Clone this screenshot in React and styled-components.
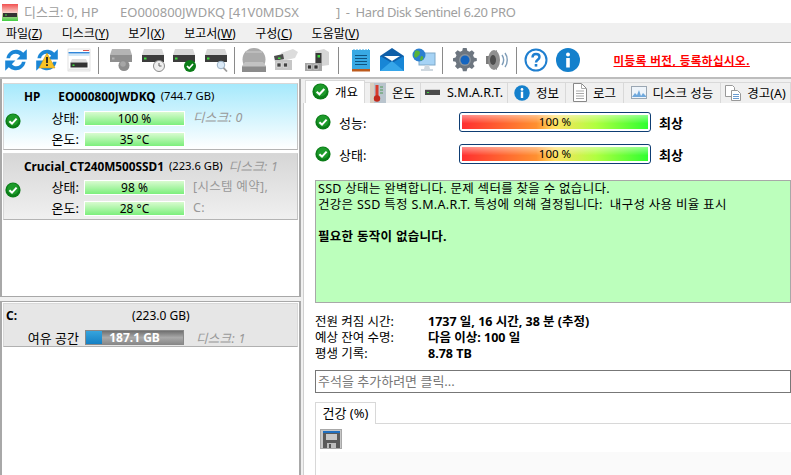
import React from 'react';
import styled, { createGlobalStyle } from 'styled-components';

const FONT = `"Noto Sans", "Noto Sans CJK KR", sans-serif`;

const GlobalStyle = createGlobalStyle`
  html, body {
    margin: 0;
    padding: 0;
    width: 791px;
    height: 475px;
    overflow: hidden;
    background: #f0f0f0;
    font-family: ${FONT};
    font-size: 12px;
    color: #000;
  }
  * { box-sizing: border-box; }
  svg { flex: none; }
`;

// --- icons ---
const Check = ({ size = 16 }) => (
  <svg width={size} height={size} viewBox="0 0 16 16">
    <circle cx="8" cy="8" r="7.6" fill="#0b7d18" />
    <circle cx="8" cy="7" r="5.8" fill="#1d9a2a" />
    <path d="M4.4 8.2 7 10.6 11.6 5.6" fill="none" stroke="#fff" strokeWidth="2" />
  </svg>
);

const Info = ({ size = 16 }) => (
  <svg width={size} height={size} viewBox="0 0 24 24">
    <circle cx="12" cy="12" r="11.6" fill="#1480cc" />
    <circle cx="12" cy="6.6" r="2" fill="#fff" />
    <rect x="10.2" y="10" width="3.6" height="9.5" fill="#fff" />
  </svg>
);

const Drive = ({ muted }) => (
  <>
    <path d="M3 1h18l2 6H1z" fill={muted ? '#b4b4b4' : '#d8d8d8'} />
    <rect x="1" y="7" width="22" height="7" fill={muted ? '#8f8f8f' : '#3c3c3c'} />
    <rect x="3" y="9.5" width="2.5" height="2" fill={muted ? '#b4b4b4' : '#3fdc3f'} />
  </>
);

const Refresh = () => (
  <g transform="translate(-2.4 -2.4) scale(1.2)">
    <path d="M4 10.5C5 5.5 9 3 13 3.5c2.200.3 3.800 1.200 5 2.500L21 3v8.500h-8.500l3-3c-1-1-2.200-1.700-3.700-1.700-2.500 0-4.300 1.300-4.800 3.700z" fill="#1b86d6" />
    <path d="M20 13.500C19 18.500 15 21 11 20.500c-2.200-.3-3.800-1.200-5-2.500L3 21v-8.500h8.500l-3 3c1 1 2.200 1.700 3.700 1.700 2.500 0 4.300-1.300 4.800-3.700z" fill="#1b86d6" />
  </g>
);

const toolIcons = {
  refresh: <Refresh />,
  refreshWarn: (
    <>
      <Refresh />
      <path d="M12 5 20 20H4z" fill="#f7c325" stroke="#c98f10" strokeWidth=".5" />
      <rect x="11.100" y="9" width="1.800" height="6" fill="#222" />
      <rect x="11.100" y="16.200" width="1.800" height="1.800" fill="#222" />
    </>
  ),
  window: (
    <>
      <rect x="1" y="1" width="22" height="22" fill="#fff" stroke="#ccc" strokeWidth=".6" />
      <rect x="1.500" y="4" width="21" height="1.500" fill="#2f86d9" />
      <rect x="1.500" y="6.500" width="21" height="1" fill="#9fd0f2" />
      <rect x="16" y="2" width="6" height="1" fill="#d9534f" />
      <path d="M5 11h14l1.500 3.500h-17z" fill="#ddd" />
      <rect x="3.500" y="14.500" width="17" height="5" fill="#333" />
      <rect x="5.500" y="16.500" width="2" height="1.500" fill="#3fdc3f" />
      <rect x="1.500" y="20.500" width="21" height="2" fill="#e6e6e6" />
    </>
  ),
  driveRound: (
    <>
      <Drive muted />
      <circle cx="15" cy="17.500" r="5.500" fill="#8d8d8d" />
      <circle cx="14" cy="16" r="2.800" fill="#a6a6a6" />
    </>
  ),
  driveClock: (
    <>
      <Drive />
      <circle cx="18" cy="18" r="5.500" fill="#eee" stroke="#8a8a8a" />
      <path d="M18 15v3h2.500" fill="none" stroke="#666" />
    </>
  ),
  driveCheck: (
    <>
      <Drive />
      <circle cx="18" cy="18" r="6" fill="#0b7d18" />
      <path d="M15 18 17.200 20.200 21 16" fill="none" stroke="#fff" strokeWidth="1.700" />
    </>
  ),
  driveSearch: (
    <>
      <Drive />
      <circle cx="17" cy="17" r="3.800" fill="#dbeaf7" stroke="#9bb2c6" />
      <path d="M19.500 19.800 23 23.500" stroke="#9a9a9a" strokeWidth="1.700" />
    </>
  ),
  dome: (
    <>
      <circle cx="12" cy="11.500" r="11.500" fill="#ababab" />
      <path d="M4 4h16" stroke="#c2c2c2" strokeWidth="1.500" />
      <path d="M3 14h18l3 4v6H0v-6z" fill="#c2c2c2" />
      <rect x="0" y="18.500" width="24" height="5.500" fill="#8b8b8b" />
    </>
  ),
  dock: (
    <>
      <path d="M7 5 19 1l5 3-3 6-13 3z" fill="#dcdcdc" />
      <path d="M0 8l9-2 1 5-9 2z" fill="#4d4d4d" />
      <rect x="1" y="12" width="17" height="10" fill="#c6c6c6" />
      <rect x="3" y="15" width="4" height="4" fill="#444" stroke="#eee" strokeWidth=".6" />
      <rect x="9.500" y="15" width="4" height="4" fill="#444" stroke="#eee" strokeWidth=".6" />
      <rect x="4" y="9.500" width="2.500" height="1.500" fill="#3fdc3f" />
    </>
  ),
  tower: (
    <>
      <path d="M10 3 19 1l5 3v13l-14 2z" fill="#d6d6d6" />
      <rect x="10.500" y="5" width="6" height="10" fill="#3a3a3a" />
      <rect x="12.500" y="7" width="2.500" height="2.500" fill="#3fdc3f" />
      <rect x="0" y="15" width="17" height="8" fill="#a6a6a6" />
      <rect x="2.500" y="17" width="4" height="4" fill="#333" stroke="#eee" strokeWidth=".6" />
      <rect x="9" y="17" width="4" height="4" fill="#333" stroke="#eee" strokeWidth=".6" />
    </>
  ),
  notes: (
    <>
      <rect x="3" y="2" width="18" height="20" fill="#38a9e4" />
      <rect x="3" y="21" width="18" height="2.500" fill="#bd5b1d" />
      <path d="M5 1v3M8 1v3M11 1v3M14 1v3M17 1v3M19.500 1v3" stroke="#38a9e4" strokeWidth="1" />
      <path d="M6 7.500h12M6 10.500h12M6 13.500h12M6 16.500h12" stroke="#10537f" strokeWidth="1" />
    </>
  ),
  mail: (
    <>
      <rect x="0" y="8" width="24" height="15" fill="#1786d6" />
      <path d="M0 8 12 0l12 8-12 7z" fill="#0f5fa8" />
      <path d="M4 8h16l-8 5z" fill="#fff" />
      <path d="M0 23 12 13l12 10z" fill="#36a6ea" />
    </>
  ),
  globe: (
    <>
      <rect x="7" y="5" width="16" height="12" fill="#a6d3f5" stroke="#7fa9c9" />
      <path d="M13 17h4l1 4h3v2H9v-2h3z" fill="#cfd8df" />
      <circle cx="7" cy="7" r="6.500" fill="#2a7fd0" />
      <path d="M3 3c3-1 5 0 5 2S6 8 5 9 3 10 2 8zM9 8c2 0 3 1 2 3s-3 2-3 0z" fill="#58b33a" />
    </>
  ),
  gear: (
    <>
      <path d="M10 1h4l.7 3 2.300 1 2.600-1.600 2.800 2.800L20.800 8.800l1 2.300 3 .9v3l-3 .7-1 2.300 1.600 2.600-2.800 2.800-2.600-1.600-2.300 1-.7 3h-4l-.7-3-2.300-1-2.600 1.600-2.800-2.800 1.600-2.600-1-2.300-3-.7v-3l3-.9 1-2.300L1.600 6.200l2.800-2.800L7 5l2.300-1z" fill="#6d7680" transform="translate(0.500 -1) scale(.94)" />
      <circle cx="12" cy="12" r="6" fill="#8c949c" />
      <circle cx="12" cy="12" r="4.500" fill="#1565c0" />
    </>
  ),
  speaker: (
    <>
      <path d="M1 8h4l7-6v20l-7-6H1z" fill="#7b7b7b" />
      <ellipse cx="9" cy="12" rx="6" ry="10" fill="#8f8f8f" />
      <ellipse cx="8" cy="12" rx="3" ry="5" fill="#4d4d4d" />
      <path d="M17 7c2 3 2 7 0 10M20 5c3 4 3 10 0 14" fill="none" stroke="#7f9db8" strokeWidth="1.400" />
    </>
  ),
  help: (
    <>
      <circle cx="12" cy="12" r="10.500" fill="#fff" stroke="#1f7fd0" strokeWidth="2" />
      <path d="M8.500 9.500C8.500 7 10 6 12 6s3.500 1.200 3.500 3c0 2.800-3.500 2.700-3.500 5.500" fill="none" stroke="#1f7fd0" strokeWidth="2.400" />
      <rect x="10.700" y="16" width="2.600" height="2.600" fill="#1f7fd0" />
    </>
  ),
  info: (
    <>
      <circle cx="12" cy="12" r="12" fill="#1480cc" />
      <circle cx="12" cy="6.500" r="2" fill="#fff" />
      <rect x="10.200" y="10" width="3.600" height="9.500" fill="#fff" />
    </>
  ),
};

const Thermo = () => (
  <svg width="16" height="20" viewBox="0 0 16 20">
    <rect width="16" height="20" fill="#b9c4cd" />
    <rect width="4" height="20" fill="#d9cfc0" />
    <rect x="5.500" y="2" width="3" height="13" fill="#d83a2a" />
    <circle cx="7" cy="15.500" r="3.200" fill="#c22a1c" />
    <path d="M10 4h3M10 7h3M10 10h3" stroke="#4f9a55" />
  </svg>
);

const SmallDrive = () => (
  <svg width="16" height="10" viewBox="0 0 16 10">
    <rect y="2" width="15" height="5" fill="#4a4a4a" />
    <rect y="1" width="15" height="1" fill="#cfcfcf" />
    <rect x="2" y="4" width="2" height="1" fill="#3fdc3f" />
  </svg>
);

const DocIcon = () => (
  <svg width="14" height="19" viewBox="0 0 14 19">
    <path d="M.5.500h8l5 5v13H.500z" fill="#fff" stroke="#888" />
    <path d="M8.500.500v5h5M3 8h8M3 10.500h8M3 13h8M3 15.500h8" fill="none" stroke="#aaa" />
  </svg>
);

const ChartIcon = () => (
  <svg width="16" height="13" viewBox="0 0 16 13">
    <rect x=".5" y=".5" width="15" height="12" fill="#eef4fa" stroke="#9aa6b2" />
    <path d="M1 11 4 7l2 2 2-5 2 6 2-3 3 3v1H1z" fill="#6fa8dc" />
  </svg>
);

const CopyIcon = () => (
  <svg width="16" height="16" viewBox="0 0 16 16">
    <path d="M.5.500h7l2 2v9h-9z" fill="#fff" stroke="#999" />
    <path d="M6.500 5.500h6l3 3v7h-9z" fill="#fff" stroke="#999" />
    <path d="M8 9.500h6M8 11.500h6M8 13.500h6" stroke="#6a9bd0" />
  </svg>
);

const AppIcon = () => (
  <svg width="16" height="18" viewBox="0 0 16 18">
    <defs>
      <linearGradient id="appg" x1="0" y1="0" x2="0" y2="1">
        <stop offset="0" stopColor="#f25050" />
        <stop offset=".5" stopColor="#f6d0c8" />
        <stop offset="1" stopColor="#40d040" />
      </linearGradient>
    </defs>
    <rect y="1" width="16" height="17" fill="url(#appg)" />
    <rect x="1" y="10" width="14" height="4" fill="#333" />
    <rect x="3" y="11.500" width="2" height="1" fill="#3fdc3f" />
  </svg>
);

const SaveIcon = () => (
  <svg width="17" height="17" viewBox="0 0 17 17">
    <rect width="17" height="17" fill="#5a5a5a" />
    <rect x="0" y="0" width="17" height="2" fill="#1f6fc0" />
    <rect x="3" y="3" width="11" height="6" fill="#c8c8c8" />
    <rect x="4" y="12" width="9" height="5" fill="#bdbdbd" />
    <rect x="6" y="13" width="2" height="4" fill="#555" />
  </svg>
);

// --- page ---
const Page = styled.div`
  width: 791px;
  height: 475px;
  display: flex;
  flex-direction: column;
  overflow: hidden;
  background: #f0f0f0;
`;

const TitleBar = styled.div`
  height: 23px;
  flex: none;
  background: #fff;
  display: flex;
  align-items: center;
  padding-left: 2px;
  gap: 6px;
  font-size: 13px;
  color: #a0a0a0;
  white-space: pre;
`;

const TitleText = styled.span`
  width: ${(p) => p.$w}px;
  flex: none;
  letter-spacing: ${(p) => p.$spacing || 0}px;
`;

const MenuBar = styled.div`
  height: 20px;
  flex: none;
  background: #f0f0f0;
  display: flex;
  align-items: center;
  padding-left: 6px;
  gap: 19.5px;
  border-bottom: 1px solid #a8a8a8;
`;

const MenuItem = styled.span`
  font-size: 12px;
  u { text-decoration: underline; }
`;

const ToolBar = styled.div`
  height: 36px;
  flex: none;
  background: #fff;
  display: flex;
  align-items: center;
  border-bottom: 2px solid #bdbdbd;
`;

const Tool = styled.div`
  width: 31.5px;
  height: 26px;
  flex: none;
  display: flex;
  align-items: center;
  justify-content: center;
`;

const Sep = styled.div`
  width: 1px;
  height: 27px;
  flex: none;
  background: #8a8a8a;
  margin: 0 ${(p) => p.$r}px 0 ${(p) => p.$l}px;
`;

const Register = styled.span`
  margin-left: 30px;
  color: #f00;
  font-size: 11.5px;
  font-weight: 700;
  letter-spacing: .5px;
  text-decoration: underline;
`;

const Main = styled.div`
  flex: 1;
  min-height: 0;
  display: flex;
`;

const LeftColumn = styled.div`
  width: 301px;
  flex: none;
  display: flex;
  flex-direction: column;
  gap: 4px;
`;

const DiskList = styled.div`
  height: 218px;
  flex: none;
  background: #fff;
  border: 1px solid #a8a8a8;
  border-width: 0 2px 1px 2px;
  padding: 4px 1px 0;
  display: flex;
  flex-direction: column;
  gap: 3px;
`;

const VolumeList = styled.div`
  flex: 1;
  background: #fff;
  border: 1px solid #a8a8a8;
  border-width: 1px 2px 0 2px;
  padding: 1px 1px 0;
`;

const DiskCard = styled.div`
  height: 67px;
  border: 1px solid #d8d8d8;
  border-right-color: #c4c4c4;
  border-bottom-color: #b4b4b4;
  background: ${(p) =>
    p.$active
      ? 'linear-gradient(#a6e9fc, #fff)'
      : 'linear-gradient(#d6d6d6, #f0f0f0)'};
  padding: 1px 0 0 20px;
`;

const NameRow = styled.div`
  height: 21px;
  display: flex;
  align-items: center;
  white-space: pre;
  font-size: 11.8px;
`;

const DiskSize = styled.span`
  font-size: 11.2px;
`;

const Bold = styled.b`
  font-weight: 700;
  margin-right: ${(p) => p.$mr || 0}px;
`;

const Faded = styled.span`
  color: #999;
  font-size: 12.5px;
  font-style: ${(p) => (p.$italic ? 'italic' : 'normal')};
  letter-spacing: .3px;
  margin-left: ${(p) => p.$ml || 0}px;
  white-space: pre;
`;

const CardBody = styled.div`
  position: relative;
  margin-top: ${(p) => p.$top}px;
  display: grid;
  grid-template-columns: 55px 99px auto;
  column-gap: 6px;
  row-gap: 7px;
  align-items: center;
`;

const CardCheck = styled.div`
  position: absolute;
  left: -19px;
  top: 2px;
  height: 16px;
  line-height: 0;
`;

const RowLabel = styled.div`
  text-align: right;
  font-size: 13px;
  line-height: 14px;
`;

const Meter = styled.div`
  height: 13px;
  line-height: 13px;
  text-align: center;
  font-size: 12px;
  background: linear-gradient(#d9fbd0, #7cef7c);
  outline: 1px solid #fff;
`;

const SideNote = styled.div`
  margin-left: 3px;
  line-height: 14px;
  white-space: pre;
`;

const VolumeCard = styled.div`
  height: 44px;
  border: 1px solid #d8d8d8;
  border-bottom-color: #b0b0b0;
  background: #e6e6e6;
  padding: 2px 0 0 2px;
`;

const VolumeHead = styled.div`
  height: 19px;
  display: flex;
  align-items: center;
  position: relative;
`;

const VolumeSize = styled.span`
  margin-left: 115px;
`;

const VolumeRow = styled.div`
  margin-top: 3px;
  display: flex;
  align-items: center;
`;

const VolumeLabel = styled.div`
  width: 73px;
  font-size: 13px;
  text-align: right;
  white-space: nowrap;
`;

const FreeBar = styled.div`
  width: 99px;
  height: 15px;
  margin-left: 6px;
  position: relative;
  background: linear-gradient(#6f6f6f, #a9a9a9 50%, #8a8a8a);
  color: #fff;
  font-weight: 700;
  font-size: 12px;
  line-height: 14px;
  text-align: center;
  border: 1px solid #888;
  margin-right: 12px;
`;

const FreeFill = styled.div`
  position: absolute;
  left: 0;
  top: 0;
  bottom: 0;
  background: linear-gradient(#36a4dd, #1580c4);
`;

const FreeText = styled.span`
  position: relative;
`;

const RightColumn = styled.div`
  flex: 1;
  min-width: 0;
  padding-left: 2px;
  display: flex;
  flex-direction: column;
`;

const TabBar = styled.div`
  height: 24px;
  flex: none;
  display: flex;
  align-items: flex-end;
  padding-left: 2px;
  white-space: nowrap;
`;

const Tab = styled.div`
  width: ${(p) => p.$w}px;
  flex: none;
  height: ${(p) => (p.$active ? 23 : 21)}px;
  padding-bottom: 1px;
  display: flex;
  align-items: center;
  justify-content: center;
  gap: 6px;
  background: ${(p) => (p.$active ? '#fff' : '#f0f0f0')};
  border-right: 1px solid #d9d9d9;
  border-top: 1px solid #d9d9d9;
  border-left: ${(p) => (p.$active ? '1px solid #d9d9d9' : '0')};
  font-size: 12.5px;
`;

const Content = styled.div`
  flex: 1;
  min-height: 0;
  background: #fff;
  border-left: 1px solid #d0d0d0;
  padding: 9px 0 0 11px;
  display: flex;
  flex-direction: column;
`;

const RatingRow = styled.div`
  height: 20px;
  margin-bottom: 12px;
  display: flex;
  align-items: center;
`;

const RatingLabel = styled.span`
  width: 120px;
  margin-left: 8px;
  flex: none;
  font-size: 13px;
`;

const RatingBar = styled.div`
  width: 192px;
  height: 20px;
  flex: none;
  border: 1px solid #0e3d73;
  border-radius: 3px;
  padding: 2px;
  background: #fff;
`;

const RatingFill = styled.div`
  height: 14px;
  line-height: 14px;
  text-align: center;
  font-size: 11.5px;
  background:
    linear-gradient(rgba(255, 255, 255, .45), rgba(255, 255, 255, 0) 60%),
    linear-gradient(90deg, #ff3030, #ff9030 40%, #ffe060 50%, #b0ff40 72%, #30ff30);
`;

const Grade = styled.b`
  margin-left: 8px;
  font-size: 13px;
  font-weight: 700;
`;

const StatusBox = styled.div`
  width: 476px;
  height: 123px;
  flex: none;
  margin-top: 4px;
  padding: 0 2px;
  background: #bcffbc;
  border: 1px solid #a8a8a8;
  font-size: 12.5px;
  letter-spacing: .3px;
  line-height: 16px;
  white-space: pre;
`;

const StatusLine = styled.div`
  height: 16px;
  font-weight: ${(p) => (p.$bold ? 700 : 400)};
`;

const Stats = styled.div`
  margin-top: 11px;
  display: grid;
  grid-template-columns: 113px auto;
  justify-content: start;
  font-size: 12.5px;
  line-height: 16px;
`;

const Comment = styled.div`
  width: 476px;
  height: 23px;
  flex: none;
  margin-top: 8px;
  border: 1px solid #777;
  color: #777;
  font-size: 13px;
  line-height: 21px;
  padding-left: 2px;
`;

const ChartTabs = styled.div`
  margin-top: 9px;
  height: 22px;
  flex: none;
  border-bottom: 1px solid #d8d8d8;
`;

const ChartTab = styled.div`
  width: 61px;
  height: 22px;
  border: 1px solid #d8d8d8;
  border-bottom: 0;
  background: #fff;
  text-align: center;
  font-size: 13px;
  line-height: 20px;
`;

const ChartPane = styled.div`
  flex: 1;
  border-left: 1px solid #d8d8d8;
  padding: 5px 0 0 4px;
`;

const SaveButton = styled.div`
  width: 22px;
  height: 20px;
  background: #c8c8c8;
  border: 1px solid #a8a8a8;
  display: flex;
  align-items: center;
  justify-content: center;
`;

const ChartArea = styled.div`
  height: 40px;
  margin-top: 3px;
  background: #fafafa;
`;

const menus = [
  ['파일', 'Z'],
  ['디스크', 'Y'],
  ['보기', 'X'],
  ['보고서', 'W'],
  ['구성', 'C'],
  ['도움말', 'V'],
];

const ToolIcon = ({ name }) => (
  <Tool>
    <svg width="24" height="24" viewBox="0 0 24 24">{toolIcons[name]}</svg>
  </Tool>
);

const App = () => (
  <Page>
    <GlobalStyle />
    <TitleBar>
      <AppIcon />
      <TitleText $w={90}>디스크: 0, HP</TitleText>
      <TitleText $w={210}>EO000800JWDKQ [41V0MDSX</TitleText>
      <TitleText $w={300} $spacing={-0.4}>]  -  Hard Disk Sentinel 6.20 PRO</TitleText>
    </TitleBar>
    <MenuBar>
      {menus.map(([label, key]) => (
        <MenuItem key={key}>{label}(<u>{key}</u>)</MenuItem>
      ))}
    </MenuBar>
    <ToolBar>
      <ToolIcon name="refresh" />
      <ToolIcon name="refreshWarn" />
      <ToolIcon name="window" />
      <Sep $l={3} $r={7} />
      <ToolIcon name="driveRound" />
      <ToolIcon name="driveClock" />
      <ToolIcon name="driveCheck" />
      <ToolIcon name="driveSearch" />
      <Sep $l={2} $r={4} />
      <ToolIcon name="dome" />
      <ToolIcon name="dock" />
      <ToolIcon name="tower" />
      <Sep $l={5} $r={6} />
      <ToolIcon name="notes" />
      <ToolIcon name="mail" />
      <ToolIcon name="globe" />
      <Sep $l={2} $r={7} />
      <ToolIcon name="gear" />
      <ToolIcon name="speaker" />
      <Sep $l={3} $r={4} />
      <ToolIcon name="help" />
      <ToolIcon name="info" />
      <Register>미등록 버전, 등록하십시오.</Register>
    </ToolBar>
    <Main>
      <LeftColumn>
        <DiskList>
          <DiskCard $active>
            <NameRow>
              <Bold $mr={18}>HP</Bold>
              <Bold $mr={5}>EO000800JWDKQ</Bold>
              <DiskSize>(744.7 GB)</DiskSize>
            </NameRow>
            <CardBody $top={5}>
              <CardCheck><Check /></CardCheck>
              <RowLabel>상태:</RowLabel>
              <Meter>100 %</Meter>
              <SideNote><Faded $italic>디스크: 0</Faded></SideNote>
              <RowLabel>온도:</RowLabel>
              <Meter>35 °C</Meter>
              <span />
            </CardBody>
          </DiskCard>
          <DiskCard>
            <NameRow>
              <Bold $mr={5}>Crucial_CT240M500SSD1</Bold>
              <DiskSize>(223.6 GB)</DiskSize>
              <Faded $italic $ml={6}>디스크: 1</Faded>
            </NameRow>
            <CardBody $top={4}>
              <CardCheck><Check /></CardCheck>
              <RowLabel>상태:</RowLabel>
              <Meter>98 %</Meter>
              <SideNote><Faded>[시스템 예약],</Faded></SideNote>
              <RowLabel>온도:</RowLabel>
              <Meter>28 °C</Meter>
              <SideNote><Faded>C:</Faded></SideNote>
            </CardBody>
          </DiskCard>
        </DiskList>
        <VolumeList>
          <VolumeCard>
            <VolumeHead>
              <Bold>C:</Bold>
              <VolumeSize>(223.0 GB)</VolumeSize>
            </VolumeHead>
            <VolumeRow>
              <VolumeLabel>여유 공간</VolumeLabel>
              <FreeBar>
                <FreeFill style={{ width: `${(36.0 / 223.0) * 100}%` }} />
                <FreeText>187.1 GB</FreeText>
              </FreeBar>
              <Faded $italic>디스크: 1</Faded>
            </VolumeRow>
          </VolumeCard>
        </VolumeList>
      </LeftColumn>
      <RightColumn>
        <TabBar>
          <Tab $active $w={60}><Check size={17} />개요</Tab>
          <Tab $w={56}><Thermo />온도</Tab>
          <Tab $w={87}><SmallDrive />S.M.A.R.T.</Tab>
          <Tab $w={58}><Info />정보</Tab>
          <Tab $w={58}><DocIcon />로그</Tab>
          <Tab $w={97}><ChartIcon />디스크 성능</Tab>
          <Tab $w={70}><CopyIcon />경고(A)</Tab>
        </TabBar>
        <Content>
          <RatingRow>
            <Check />
            <RatingLabel>성능:</RatingLabel>
            <RatingBar><RatingFill>100 %</RatingFill></RatingBar>
            <Grade>최상</Grade>
          </RatingRow>
          <RatingRow>
            <Check />
            <RatingLabel>상태:</RatingLabel>
            <RatingBar><RatingFill>100 %</RatingFill></RatingBar>
            <Grade>최상</Grade>
          </RatingRow>
          <StatusBox>
            <StatusLine>SSD 상태는 완벽합니다. 문제 섹터를 찾을 수 없습니다.</StatusLine>
            <StatusLine>건강은 SSD 특정 S.M.A.R.T. 특성에 의해 결정됩니다:  내구성 사용 비율 표시</StatusLine>
            <StatusLine />
            <StatusLine $bold>필요한 동작이 없습니다.</StatusLine>
          </StatusBox>
          <Stats>
            <span>전원 켜짐 시간:</span>
            <Bold>1737 일, 16 시간, 38 분 (추정)</Bold>
            <span>예상 잔여 수명:</span>
            <Bold>다음 이상: 100 일</Bold>
            <span>평생 기록:</span>
            <Bold>8.78 TB</Bold>
          </Stats>
          <Comment>주석을 추가하려면 클릭...</Comment>
          <ChartTabs><ChartTab>건강 (%)</ChartTab></ChartTabs>
          <ChartPane>
            <SaveButton><SaveIcon /></SaveButton>
            <ChartArea />
          </ChartPane>
        </Content>
      </RightColumn>
    </Main>
  </Page>
);

export default App;
